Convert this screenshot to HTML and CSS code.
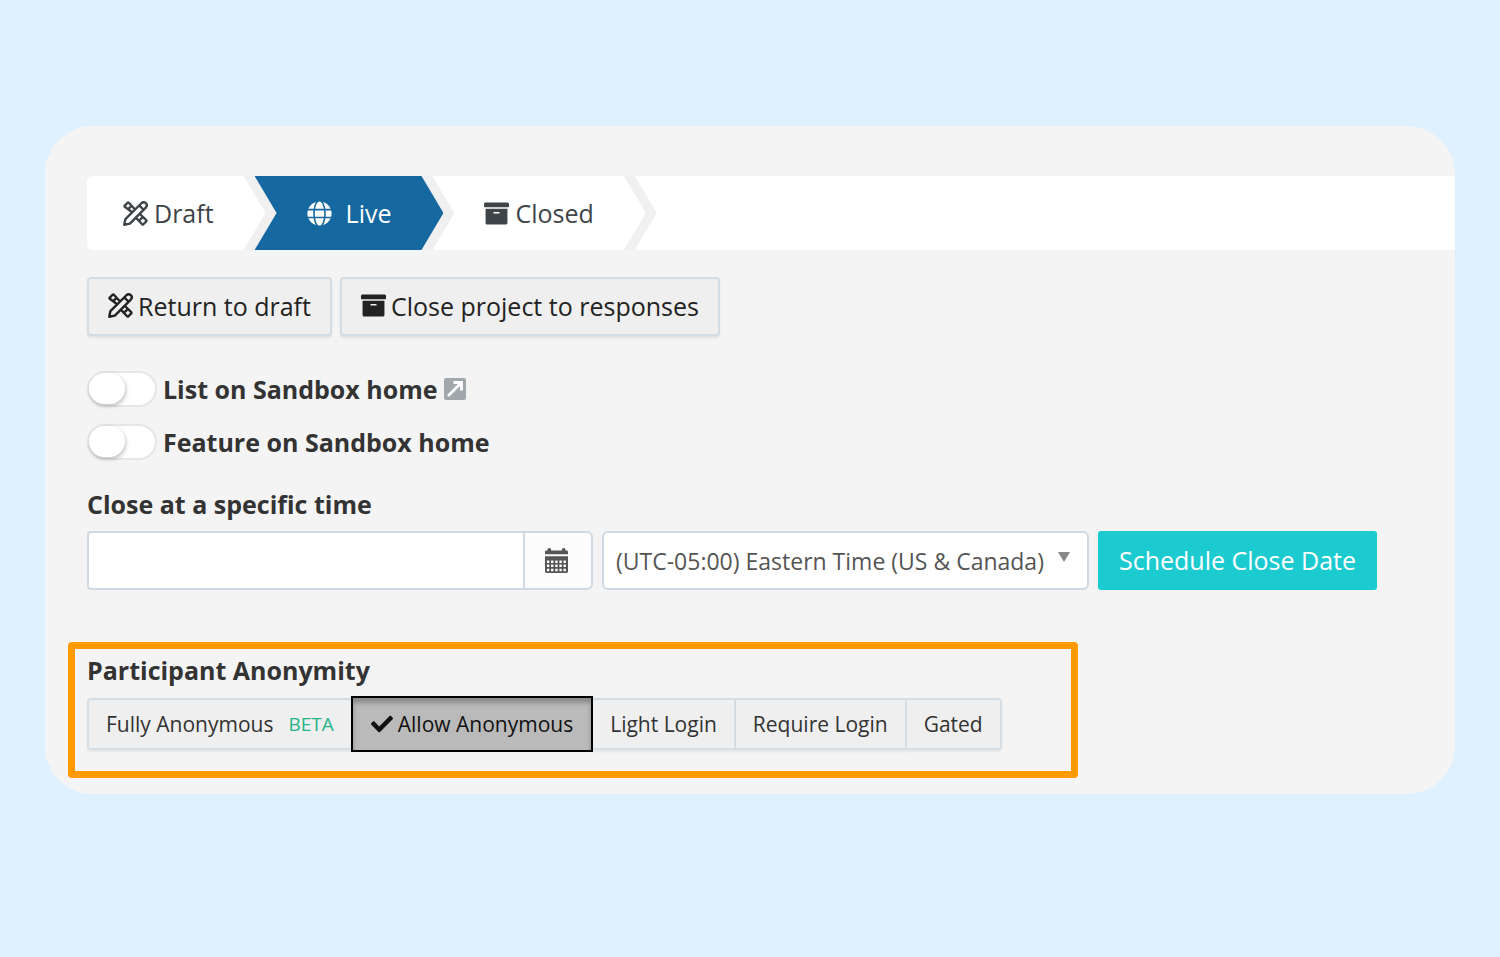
FILE: index.html
```html
<!DOCTYPE html>
<html lang="en">
<head>
<meta charset="utf-8">
<title>Project status</title>
<link rel="stylesheet" href="styles.css">
</head>
<body>
<svg class="sprite" aria-hidden="true">
  <symbol id="tools" viewBox="0 0 24 24">
    <g fill="none" stroke="currentColor" stroke-width="2.300" stroke-linejoin="round" stroke-linecap="round">
      <path d="M8.500 10.500 1.700 5.500Q1.200 5 1.700 4.400L4.400 1.700Q5 1.200 5.600 1.700L10.500 7M5.200 7.600 7 5.800"/>
      <path d="M17 13.200 22.300 18.400Q22.800 19 22.300 19.600L19.600 22.300Q19 22.800 18.400 22.300L13.200 17M16.200 18.200 18 16.400"/>
      <path d="M1.200 22.800 2.300 17.400 17.900 1.900Q20 .3 22 2.100 23.700 4 22.100 6.100L6.600 21.700ZM15.600 4.200 19.800 8.400"/>
    </g>
  </symbol>
  <symbol id="archive" viewBox="0 0 512 512">
    <path fill="currentColor" d="M32 448c0 17.700 14.300 32 32 32h384c17.700 0 32-14.300 32-32V160H32v288zm160-212c0-6.600 5.400-12 12-12h104c6.600 0 12 5.400 12 12v8c0 6.600-5.400 12-12 12H204c-6.600 0-12-5.400-12-12v-8zM480 32H32C14.300 32 0 46.300 0 64v48c0 8.800 7.200 16 16 16h480c8.800 0 16-7.200 16-16V64c0-17.700-14.300-32-32-32z"/>
  </symbol>
  <symbol id="globe" viewBox="0 0 496 512">
    <path fill="currentColor" d="M336.500 160C322 70.700 287.800 8 248 8s-74 62.700-88.500 152h177zM152 256c0 22.200 1.200 43.500 3.300 64h185.300c2.100-20.500 3.300-41.800 3.300-64s-1.200-43.500-3.300-64H155.300c-2.100 20.500-3.300 41.800-3.300 64zm324.700-96c-28.600-67.900-86.500-120.400-158-141.600 24.400 33.800 41.200 84.700 50 141.600h108zM177.200 18.400C105.800 39.600 47.800 92.100 19.300 160h108c8.700-56.900 25.500-107.800 49.900-141.600zM487.400 192H372.700c2.100 21 3.300 42.500 3.300 64s-1.200 43-3.300 64h114.600c5.500-20.500 8.600-41.800 8.600-64s-3.100-43.500-8.500-64zM120 256c0-21.500 1.200-43 3.300-64H8.600C3.200 212.500 0 233.800 0 256s3.200 43.500 8.600 64h114.600c-2-21-3.200-42.500-3.200-64zm39.500 96c14.500 89.300 48.700 152 88.500 152s74-62.700 88.500-152h-177zm159.300 141.600c71.400-21.200 129.400-73.700 158-141.600h-108c-8.800 56.900-25.600 107.800-50 141.600zM19.300 352c28.600 67.900 86.500 120.400 158 141.600-24.400-33.800-41.200-84.700-50-141.600h-108z"/>
  </symbol>
  <symbol id="check" viewBox="0 0 512 512">
    <path fill="currentColor" d="M173.900 439.400l-166.400-166.400c-10-10-10-26.200 0-36.200l36.200-36.200c10-10 26.200-10 36.200 0L192 312.700 432.100 72.600c10-10 26.200-10 36.200 0l36.200 36.200c10 10 10 26.200 0 36.200l-294.400 294.400c-10 10-26.200 10-36.200 0z"/>
  </symbol>
  <symbol id="external" viewBox="0 0 22 22">
    <rect width="22" height="22" rx="2" fill="#a0a8ab"/>
    <path d="M4 18 17 5M9.500 4.500H17.500V12.500" fill="none" stroke="#fff" stroke-width="2.800"/>
  </symbol>
  <symbol id="calendar" viewBox="0 0 24 26">
    <path fill="currentColor" fill-rule="evenodd" d="M0 6.500V4Q0 2.500 1.500 2.500H2.500Q2.500 0 4.500 0T6.500 2.500H17.500Q17.500 0 19.500 0T21.500 2.500H22.500Q24 2.500 24 4V6.500ZM0 8.500H24V24.500Q24 26 22.500 26H1.500Q0 26 0 24.500ZM2 13v2.500h2.500V13zm4.300 0v2.500h2.500V13zm4.400 0v2.500h2.500V13zm4.300 0v2.500h2.500V13zm4.300 0v2.500h2.500V13zM2 17.300v2.500h2.500v-2.500zm4.300 0v2.500h2.500v-2.500zm4.400 0v2.500h2.500v-2.500zm4.300 0v2.500h2.500v-2.500zm4.300 0v2.500h2.500v-2.500zM2 21.600v2.500h2.500v-2.500zm4.300 0v2.500h2.500v-2.500zm4.400 0v2.500h2.500v-2.500zm4.300 0v2.500h2.500v-2.500zm4.300 0v2.500h2.500v-2.500z"/>
  </symbol>
</svg>

<main class="card">
  <ol class="steps">
    <li class="step"><a class="step-link" href="#draft"><svg class="icon"><use href="#tools"/></svg>Draft</a></li>
    <li class="step step-current"><a class="step-link" href="#live" aria-current="step"><svg class="icon"><use href="#globe"/></svg>Live</a></li>
    <li class="step"><a class="step-link" href="#closed"><svg class="icon"><use href="#archive"/></svg>Closed</a></li>
  </ol>

  <div class="actions">
    <button class="button" type="button"><svg class="icon"><use href="#tools"/></svg>Return to draft</button>
    <button class="button" type="button"><svg class="icon"><use href="#archive"/></svg>Close project to responses</button>
  </div>

  <div class="toggles">
    <div class="toggle-row">
      <input class="toggle" type="checkbox" role="switch" id="list-home">
      <label for="list-home">List on Sandbox home</label>
      <a class="external" href="#home" aria-label="Open Sandbox home"><svg class="external-icon"><use href="#external"/></svg></a>
    </div>
    <div class="toggle-row">
      <input class="toggle" type="checkbox" role="switch" id="feature-home">
      <label for="feature-home">Feature on Sandbox home</label>
    </div>
  </div>

  <label class="heading" for="close-date">Close at a specific time</label>
  <div class="schedule">
    <div class="date-field">
      <input class="date-input" type="text" id="close-date">
      <button class="date-button" type="button" aria-label="Choose date"><svg class="calendar-icon"><use href="#calendar"/></svg></button>
    </div>
    <div class="zone">
      <select class="zone-select" aria-label="Time zone">
        <option>(UTC-05:00) Eastern Time (US &amp; Canada)</option>
      </select>
    </div>
    <button class="primary" type="button">Schedule Close Date</button>
  </div>

  <section class="highlight" aria-labelledby="anonymity">
    <h2 class="heading" id="anonymity">Participant Anonymity</h2>
    <div class="segments" role="group" aria-labelledby="anonymity">
      <button class="segment" type="button">Fully Anonymous<span class="beta">BETA</span></button>
      <button class="segment segment-active" type="button" aria-pressed="true"><svg class="check-icon"><use href="#check"/></svg>Allow Anonymous</button>
      <button class="segment" type="button">Light Login</button>
      <button class="segment" type="button">Require Login</button>
      <button class="segment" type="button">Gated</button>
    </div>
  </section>
</main>
</body>
</html>
```
FILE: styles.css
```css
* {
  box-sizing: border-box;
}

body {
  margin: 0;
  padding: 126px 45px;
  background: #dff1ff;
  color: #333;
  font: 25px/34px "Open Sans", "Noto Sans", sans-serif;
}

button,
input,
select {
  font: inherit;
  color: inherit;
  margin: 0;
}

.sprite {
  position: absolute;
  width: 0;
  height: 0;
}

.card {
  padding: 50px 0 16px 42px;
  overflow: hidden;
  border-radius: 48px;
  background: #f4f4f4;
}

.icon {
  width: 25px;
  height: 25px;
  flex: none;
}

/* Steps */
.steps {
  display: flex;
  height: 74px;
  margin: 0;
  padding: 0;
  list-style: none;
  overflow: hidden;
  border-radius: 6px 0 0 6px;
  background: #fff;
}

.step {
  position: relative;
  z-index: 1;
  margin-left: -22px;
  padding-right: 11px;
  background: #f0f0f0;
  clip-path: polygon(0 0, calc(100% - 22px) 0, 100% 50%, calc(100% - 22px) 100%, 0 100%);
}

.step:first-child {
  z-index: 3;
  margin-left: 0;
}

.step-current {
  z-index: 2;
}

.step-link {
  display: flex;
  align-items: center;
  gap: 6px;
  height: 100%;
  padding: 0 52px;
  background: #fff;
  color: #3e4447;
  text-decoration: none;
  clip-path: polygon(0 0, calc(100% - 22px) 0, 100% 50%, calc(100% - 22px) 100%, 0 100%);
}

.step:first-child .step-link {
  padding-left: 36px;
}

.step-current .step-link {
  gap: 14px;
  background: #1668a0;
  color: #fff;
}

/* Buttons */
.actions {
  display: flex;
  gap: 8px;
  margin-top: 27px;
}

.button {
  display: flex;
  align-items: center;
  gap: 5px;
  height: 59px;
  padding: 0 19px 2px;
  border: 2px solid #d3dde5;
  border-radius: 4px;
  background: #efefef;
  color: #222;
  box-shadow: 0 2px 2px rgba(0, 0, 0, 0.08);
}

/* Toggles */
.toggles {
  display: grid;
  gap: 17px;
  margin-top: 35px;
  font-weight: 700;
}

.toggle-row {
  display: flex;
  align-items: center;
  height: 36px;
}

.toggle {
  appearance: none;
  width: 70px;
  height: 36px;
  margin-right: 6px;
  border: 2px solid #e6e6e6;
  border-radius: 18px;
  background: #fff;
}

.toggle::before {
  content: "";
  display: block;
  width: 36px;
  height: 31px;
  border-radius: 16px;
  background: #fff;
  box-shadow: 1px 2px 4px rgba(0, 0, 0, 0.25);
}

.toggle:checked::before {
  margin-left: auto;
}

.external {
  display: flex;
  margin-left: 6px;
}

.external-icon {
  width: 22px;
  height: 22px;
}

.heading {
  display: block;
  margin: 0;
  font-size: 25px;
  font-weight: 700;
}

/* Schedule row */
.toggles + .heading {
  margin-top: 27px;
}

.schedule {
  display: flex;
  gap: 9px;
  height: 59px;
  margin-top: 10px;
  padding-right: 24px;
}

.date-field {
  display: flex;
  flex: 0 1 506px;
}

.date-input {
  flex: 1;
  min-width: 0;
  padding: 0 14px;
  border: 2px solid #cfdae4;
  border-right: 0;
  border-radius: 4px 0 0 4px;
  background: #fff;
}

.date-button {
  display: flex;
  align-items: center;
  justify-content: center;
  width: 70px;
  padding: 0 4px 0 0;
  border: 2px solid #cfdae4;
  border-radius: 0 6px 6px 0;
  background: #fcfcfc;
  color: #555;
}

.calendar-icon {
  width: 23px;
  height: 25px;
}

.zone {
  position: relative;
  flex: 0 1 487px;
}

.zone::after {
  content: "";
  position: absolute;
  top: 21px;
  right: 19px;
  border: 6px solid transparent;
  border-top: 10px solid #888;
  border-bottom: 0;
  pointer-events: none;
}

.zone-select {
  appearance: none;
  width: 100%;
  height: 100%;
  padding: 0 40px 0 12px;
  border: 2px solid #cfdae4;
  border-radius: 6px;
  background: #fff;
  color: #555;
  font-size: 23px;
}

.primary {
  flex: none;
  padding: 0 21px 2px;
  border: 0;
  border-radius: 3px;
  background: #1ccbd0;
  color: #fff;
}

/* Anonymity */
.highlight {
  width: fit-content;
  margin: 52px 0 0 -19px;
  padding: 4px 69px 21px 12px;
  border: 7px solid #ff9b00;
  border-radius: 4px;
}

.segments {
  display: flex;
  margin-top: 11px;
}

.segment {
  display: flex;
  align-items: center;
  height: 52px;
  padding: 0 17px;
  border: 2px solid #d5dee5;
  border-left-width: 0;
  background: #efefef;
  color: #333;
  font-size: 21px;
  box-shadow: 0 2px 2px rgba(0, 0, 0, 0.06);
}

.segment:first-child {
  border-left-width: 2px;
  border-radius: 4px 0 0 4px;
}

.segment:last-child {
  border-radius: 0 4px 4px 0;
}

.beta {
  margin-left: 15px;
  color: #27b48a;
  font-size: 19px;
}

.segment-active {
  gap: 5px;
  height: 56px;
  margin: -2px 0 -2px -2px;
  padding: 0 18px;
  border: 2px solid #000;
  background: #bababa;
  color: #111;
  box-shadow: inset 0 5px 4px rgba(0, 0, 0, 0.25);
}

.check-icon {
  width: 22px;
  height: 22px;
}
```
